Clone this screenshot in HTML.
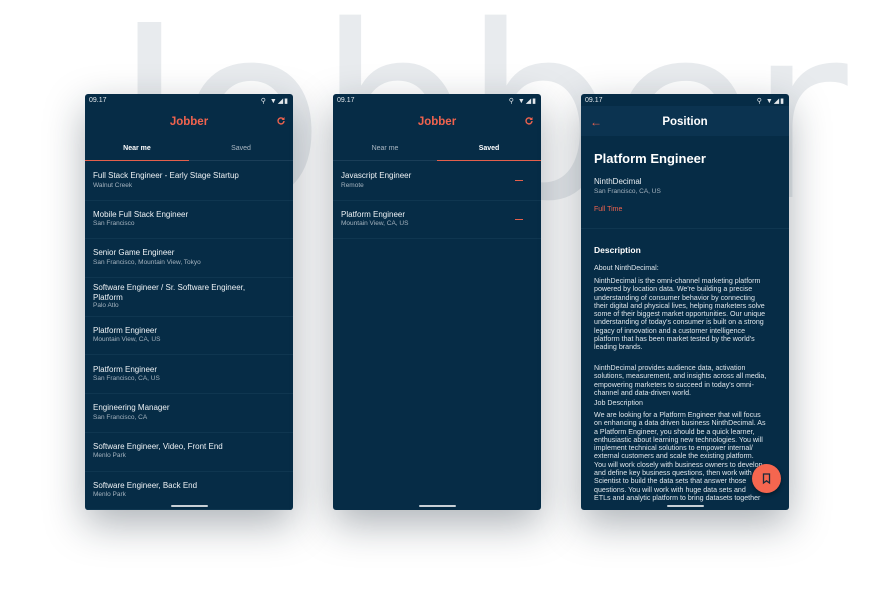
<!DOCTYPE html>
<html><head><meta charset="utf-8"><style>
*{margin:0;padding:0;box-sizing:border-box}
body{width:875px;height:615px;background:#fff;position:relative;overflow:hidden;font-family:"Liberation Sans",sans-serif}
.bg{position:absolute;left:114px;top:-6px;font-size:240px;line-height:1;color:#e8ebee;letter-spacing:-7px;font-family:"DejaVu Sans","Liberation Sans",sans-serif;white-space:nowrap}
.ph{position:absolute;top:94px;width:208px;height:416px;background:#062c46;border-radius:3px;box-shadow:0 14px 40px rgba(20,35,50,.35);overflow:hidden;color:#e8edf1}
.sb{position:absolute;top:0;left:0;right:0;height:12px;font-size:7px;padding:3px 0 0 4px;color:#e3e8ec}
.ic{position:absolute;right:4px;top:3px;font-size:7px;letter-spacing:1px}
.ab{position:absolute;top:12px;left:0;right:0;height:30px;text-align:center;font-weight:bold;font-size:11.5px;line-height:32px;color:#f0634e}
.rf{position:absolute;right:7px;top:10px}
.tabs{position:absolute;top:42px;left:0;right:0;height:25px;border-bottom:1px solid #1a3e58;font-size:7px}
.tab{position:absolute;top:0;width:104px;height:25px;line-height:25px;text-align:center;color:#aab7c2}
.tab.on{color:#fff;font-weight:bold;border-bottom:1.5px solid #e4604c}
.it{position:absolute;left:0;right:0;height:38.7px;border-bottom:1px solid #0f3650;padding:9px 0 0 8px}
.t{font-size:8px;color:#eef2f5;line-height:9.5px}
.s{font-size:6.5px;color:#a5b3bf;line-height:9px}
.dash{position:absolute;right:18px;top:18px;width:8px;height:1.3px;background:#e4604c}
.home{position:absolute;bottom:3px;left:86px;width:37px;height:2px;background:#c8d0d6;border-radius:1px}
.p{font-size:7.1px;line-height:8.3px;color:#dfe6eb;white-space:nowrap}
</style></head><body>
<div class="bg">Jobber</div>

<div class="ph" style="left:85px">
<div class="sb">09.17<span class="ic">⚲ ▼◢▮</span></div>
<div class="ab">Jobber<svg class="rf" width="10" height="10" viewBox="0 0 10 10"><path d="M8 5a3 3 0 1 1-1-2.3" fill="none" stroke="#f0634e" stroke-width="1.4"/><path d="M8.5 1v3h-3z" fill="#f0634e"/></svg></div>
<div class="tabs"><div class="tab on" style="left:0">Near me</div><div class="tab" style="left:104px">Saved</div></div>
<div class="it" style="top:68px"><div class="t">Full Stack Engineer - Early Stage Startup</div><div class="s">Walnut Creek</div></div>
<div class="it" style="top:106.7px"><div class="t">Mobile Full Stack Engineer</div><div class="s">San Francisco</div></div>
<div class="it" style="top:145.4px"><div class="t">Senior Game Engineer</div><div class="s">San Francisco, Mountain View, Tokyo</div></div>
<div class="it" style="top:184.1px;padding-top:5px"><div class="t">Software Engineer / Sr. Software Engineer,<br>Platform</div><div class="s" style="line-height:7px">Palo Atlo</div></div>
<div class="it" style="top:222.8px"><div class="t">Platform Engineer</div><div class="s">Mountain View, CA, US</div></div>
<div class="it" style="top:261.5px"><div class="t">Platform Engineer</div><div class="s">San Francisco, CA, US</div></div>
<div class="it" style="top:300.2px"><div class="t">Engineering Manager</div><div class="s">San Francisco, CA</div></div>
<div class="it" style="top:338.9px"><div class="t">Software Engineer, Video, Front End</div><div class="s">Menlo Park</div></div>
<div class="it" style="top:377.6px"><div class="t">Software Engineer, Back End</div><div class="s">Menlo Park</div></div>
<div class="home"></div>
</div>

<div class="ph" style="left:333px">
<div class="sb">09.17<span class="ic">⚲ ▼◢▮</span></div>
<div class="ab">Jobber<svg class="rf" width="10" height="10" viewBox="0 0 10 10"><path d="M8 5a3 3 0 1 1-1-2.3" fill="none" stroke="#f0634e" stroke-width="1.4"/><path d="M8.5 1v3h-3z" fill="#f0634e"/></svg></div>
<div class="tabs"><div class="tab" style="left:0">Near me</div><div class="tab on" style="left:104px">Saved</div></div>
<div class="it" style="top:68px"><div class="t">Javascript Engineer</div><div class="s">Remote</div><div class="dash"></div></div>
<div class="it" style="top:106.7px"><div class="t">Platform Engineer</div><div class="s">Mountain View, CA, US</div><div class="dash"></div></div>
<div class="home"></div>
</div>

<div class="ph" style="left:581px">
<div class="sb">09.17<span class="ic">⚲ ▼◢▮</span></div>
<div style="position:absolute;top:12px;left:0;right:0;height:30px;background:#0b3350;text-align:center;font-weight:bold;font-size:11.5px;line-height:32px;color:#fff">Position<span style="position:absolute;left:9px;top:0;color:#f0634e;font-weight:normal;font-size:12px">←</span></div>
<div style="position:absolute;left:13px;top:57px;font-size:13px;font-weight:bold;color:#fff">Platform Engineer</div>
<div style="position:absolute;left:13px;top:83px;font-size:8px">NinthDecimal</div>
<div style="position:absolute;left:13px;top:94px;font-size:6.5px;color:#a5b3bf">San Francisco, CA, US</div>
<div style="position:absolute;left:13px;top:112px;font-size:7px;color:#f0634e">Full Time</div>
<div style="position:absolute;left:0;right:0;top:134px;border-top:1px solid #0f3650"></div>
<div style="position:absolute;left:13px;top:151px;font-size:8.5px;font-weight:bold;color:#fff">Description</div>
<div class="p" style="position:absolute;left:13px;top:170px">About NinthDecimal:</div>
<div class="p" style="position:absolute;left:13px;top:183px">NinthDecimal is the omni-channel marketing platform<br>powered by location data. We're building a precise<br>understanding of consumer behavior by connecting<br>their digital and physical lives, helping marketers solve<br>some of their biggest market opportunities. Our unique<br>understanding of today's consumer is built on a strong<br>legacy of innovation and a customer intelligence<br>platform that has been market tested by the world's<br>leading brands.</div>
<div class="p" style="position:absolute;left:13px;top:270px">NinthDecimal provides audience data, activation<br>solutions, measurement, and insights across all media,<br>empowering marketers to succeed in today's omni-<br>channel and data-driven world.</div>
<div class="p" style="position:absolute;left:13px;top:305px">Job Description</div>
<div class="p" style="position:absolute;left:13px;top:317px">We are looking for a Platform Engineer that will focus<br>on enhancing a data driven business NinthDecimal. As<br>a Platform Engineer, you should be a quick learner,<br>enthusiastic about learning new technologies. You will<br>implement technical solutions to empower internal/<br>external customers and scale the existing platform.<br>You will work closely with business owners to develop<br>and define key business questions, then work with<br>Scientist to build the data sets that answer those<br>questions. You will work with huge data sets and<br>ETLs and analytic platform to bring datasets together</div>
<div style="position:absolute;left:171px;top:370px;width:29px;height:29px;border-radius:50%;background:#f5664f;box-shadow:0 2px 5px rgba(0,0,0,.4)"><svg width="29" height="29" viewBox="0 0 29 29"><path d="M11.5 10h6v9l-3-2.2-3 2.2z" fill="none" stroke="#1a2a3a" stroke-width="1.3"/></svg></div>
<div class="home"></div>
</div>
</body></html>
